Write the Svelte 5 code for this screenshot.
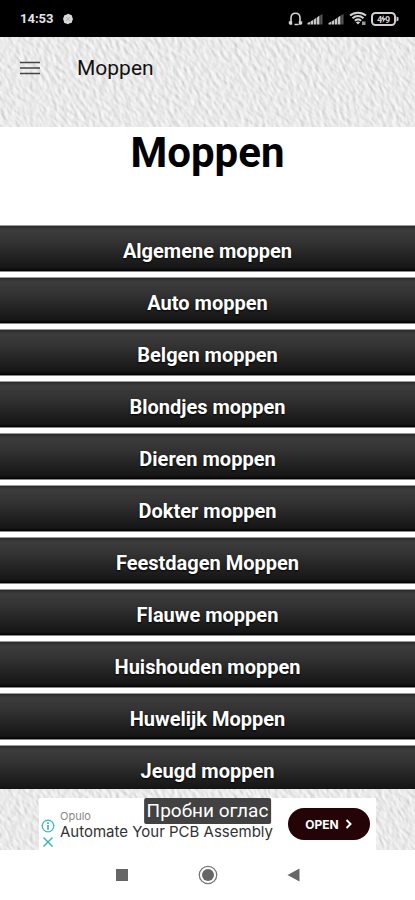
<script>
  const categories = [
    'Algemene moppen',
    'Auto moppen',
    'Belgen moppen',
    'Blondjes moppen',
    'Dieren moppen',
    'Dokter moppen',
    'Feestdagen Moppen',
    'Flauwe moppen',
    'Huishouden moppen',
    'Huwelijk Moppen',
    'Jeugd moppen'
  ];
</script>

{#snippet plaster(id)}
  <svg class="plaster" aria-hidden="true">
    <filter {id} x="0" y="0" width="100%" height="100%" color-interpolation-filters="sRGB">
      <feTurbulence type="fractalNoise" baseFrequency="0.26 0.13" numOctaves="2" seed="8" />
      <feColorMatrix type="matrix" values="0 0 0 0 0  0 0 0 0 0  0 0 0 0 0  1 0 0 0 0" />
      <feDiffuseLighting surfaceScale="0.6" diffuseConstant="1.04" lighting-color="#f6f6f6">
        <feDistantLight azimuth="200" elevation="66" />
      </feDiffuseLighting>
    </filter>
    <g transform="rotate(-32)">
      <rect x="-100" y="-20" width="700" height="400" filter="url(#{id})" />
    </g>
  </svg>
{/snippet}

{#snippet signal()}
  <svg width="17" height="12" viewBox="0 0 17 12" aria-hidden="true">
    <path d="M.5 11.500V10L3 8.800V11.500zM3.500 11.500V8.500L6 7V11.500zM6.600 11.500V6.700L9 5V11.500zM9.600 11.500V4.700L12.500 2.500V11.500z" fill="#c8c8c8" />
    <path d="M13.200 11.500V2.300L15.500 1V11.500z" fill="#555" />
  </svg>
{/snippet}

<div class="screen">
  <div class="status">
    <span class="clock">14:53</span>
    <svg class="dot" width="12" height="12" viewBox="0 0 12 12" aria-hidden="true">
      <path d="M6 .7 8 1.500 10 2.500 10.300 4.500 11 6 10.200 8 9.500 10 7.500 10.300 6 11.200 4 10.400 2 9.800 1.700 7.500 1 6 1.700 4 2.400 2.200 4.200 1.700z" fill="#d8d8d8" />
      <path d="M4 4l4 4M8 4 4 8" stroke="#aaa" stroke-width=".8" />
    </svg>
    <div class="indicators">
      <svg width="15" height="14" viewBox="0 0 15 14" aria-hidden="true">
        <path d="M3 10V6.200C3 3 4.800 1.200 7.500 1.200S12 3 12 6.200V10" fill="none" stroke="#d4d4d4" stroke-width="1.600" />
        <path d="M.8 9.200h3.400v3.600H1.800L.8 11.800zM10.800 9.200h3.400v2.600l-1 1h-2.400zM6.500 11.800h4v1.400h-4z" fill="#d4d4d4" />
      </svg>
      {@render signal()}
      {@render signal()}
      <svg width="18" height="15" viewBox="0 0 18 15" aria-hidden="true">
        <g fill="none" stroke="#d4d4d4" stroke-width="2">
          <path d="M1 4.600C5.500.7 12.500.7 17 4.600" />
          <path d="M3.500 7.200c3.300-2.800 7.700-2.800 11 0" />
          <path d="M5.800 9.700c2-1.700 4.400-1.700 6.400 0" />
        </g>
        <path d="M6.800 11.200q2.200-1.500 4.400 0L9 13.600z" fill="#d4d4d4" />
        <path d="M13 10.500h3.500V14H13z" fill="#999" />
      </svg>
      <svg class="battery" width="28" height="14" viewBox="0 0 28 14" aria-hidden="true">
        <rect x="1" y="1" width="23" height="12" rx="3.500" fill="none" stroke="#d0d0d0" stroke-width="2" />
        <path d="M25.500 4.500l2 1v3l-2 1z" fill="#d0d0d0" />
        <text x="6" y="10.500">4</text>
        <text x="14" y="10.500">9</text>
        <path d="M12.800 3 9.800 7.500h2.500L11.500 11l3.500-4.800h-2.500z" fill="#ddd" />
      </svg>
    </div>
  </div>

  <header>
    {@render plaster('plaster-top')}
    <button class="menu" aria-label="Menu">
      <svg width="20" height="14" viewBox="0 0 20 14" aria-hidden="true">
        <path d="M0 1.500h20M0 7h20M0 12.500h20" stroke="#444" stroke-width="1.700" />
      </svg>
    </button>
    <span class="title">Moppen</span>
  </header>

  <main>
    <h1>Moppen</h1>
    <nav class="list">
      {#each categories as name}
        <button class="category">{name}</button>
      {/each}
    </nav>
  </main>

  <div class="banner">
    {@render plaster('plaster-bottom')}
    <aside class="ad">
      <div class="marks">
        <button aria-label="Info">
          <svg width="14" height="14" viewBox="0 0 14 14" aria-hidden="true">
            <circle cx="7" cy="7" r="5.800" fill="none" stroke="#3fb4c8" stroke-width="1.300" />
            <path d="M7 3.200v1.700M7 6v4.700" stroke="#3fb4c8" stroke-width="1.700" />
          </svg>
        </button>
        <button aria-label="Close">
          <svg width="14" height="12" viewBox="0 0 14 12" aria-hidden="true">
            <path d="M2.500 1.500l9 9M11.500 1.500l-9 9" stroke="#3fb4c8" stroke-width="1.500" />
          </svg>
        </button>
      </div>
      <div class="copy">
        <span class="brand">Opulo</span>
        <span class="headline">Automate Your PCB Assembly</span>
      </div>
      <button class="open">
        OPEN
        <svg width="8" height="10" viewBox="0 0 8 10" aria-hidden="true">
          <path d="M1.500 1l4 4-4 4" fill="none" stroke="#fff" stroke-width="2" />
        </svg>
      </button>
      <span class="test">Пробни оглас</span>
    </aside>
  </div>

  <div class="system">
    <button aria-label="Recent apps">
      <svg width="20" height="20" viewBox="0 0 20 20" aria-hidden="true">
        <rect x="4" y="4" width="12" height="12" fill="#666" />
      </svg>
    </button>
    <button aria-label="Home">
      <svg width="20" height="20" viewBox="0 0 20 20" aria-hidden="true">
        <circle cx="10" cy="10" r="8.700" fill="none" stroke="#777" stroke-width="1.300" />
        <circle cx="10" cy="10" r="6" fill="#666" />
      </svg>
    </button>
    <button aria-label="Back">
      <svg width="20" height="20" viewBox="0 0 20 20" aria-hidden="true">
        <path d="M15.500 3.500v13L3.500 10z" fill="#666" />
      </svg>
    </button>
  </div>
</div>

<style>
  :global(body) {
    margin: 0;
  }

  .screen {
    display: flex;
    flex-direction: column;
    height: 100vh;
    overflow: hidden;
    background: #fff;
    font-family: Roboto, 'Noto Sans', sans-serif;
    color: #000;
  }

  button {
    margin: 0;
    padding: 0;
    border: 0;
    background: none;
    font: inherit;
    color: inherit;
    cursor: pointer;
  }

  svg {
    display: block;
  }

  .status {
    flex: none;
    display: flex;
    align-items: center;
    gap: 8px;
    height: 37px;
    padding: 0 16px 0 20px;
    box-sizing: border-box;
    background: #000;
    color: #e4e4e4;
  }

  .clock {
    font-size: 13px;
    font-weight: 700;
  }

  .indicators {
    display: flex;
    align-items: center;
    margin-left: auto;
    gap: 4px;
  }

  .battery text {
    font: 700 9px Roboto, sans-serif;
    fill: #d0d0d0;
  }

  header {
    flex: none;
    position: relative;
    display: flex;
    align-items: center;
    height: 90px;
    padding: 0 20px 28px;
    gap: 37px;
    box-sizing: border-box;
    background: #e8e8e8;
  }

  .plaster {
    position: absolute;
    inset: 0;
    width: 100%;
    height: 100%;
    overflow: hidden;
  }

  .menu,
  .title {
    position: relative;
  }

  .title {
    font-size: 21px;
    line-height: 26px;
    color: #111;
  }

  main {
    flex: 1;
    min-height: 0;
    overflow: hidden;
  }

  h1 {
    margin: 0;
    padding-bottom: 46px;
    font-size: 42px;
    line-height: 52px;
    font-weight: 700;
    text-align: center;
  }

  .list {
    display: flex;
    flex-direction: column;
    gap: 5px;
  }

  .category {
    flex: none;
    height: 47px;
    padding-top: 4px;
    box-sizing: border-box;
    border-top: 1px solid #999;
    border-bottom: 1px solid #888;
    background: linear-gradient(#2a2a2a, #3c3c3c 8%, #333 35%, #151515 94%, #000);
    color: #fff;
    font-size: 20px;
    line-height: 24px;
    font-weight: 700;
    text-shadow: 0 1px 2px #000;
  }

  .banner {
    flex: none;
    position: relative;
    display: flex;
    justify-content: center;
    padding: 9px 39px 0;
    background: #e8e8e8;
  }

  .ad {
    position: relative;
    display: flex;
    align-items: center;
    width: 100%;
    height: 52px;
    padding-right: 6px;
    box-sizing: border-box;
    background: #fff;
  }

  .marks {
    display: flex;
    flex-direction: column;
    gap: 3px;
    padding: 18px 5px 0 2px;
  }

  .copy {
    flex: 1;
    min-width: 0;
    display: flex;
    flex-direction: column;
    white-space: nowrap;
    font-family: Inter, sans-serif;
    font-size: 15px;
    line-height: 16px;
    color: #333;
  }

  .brand {
    font-size: 11px;
    color: #888;
  }

  .open {
    display: flex;
    align-items: center;
    justify-content: center;
    gap: 6px;
    width: 82px;
    height: 32px;
    border-radius: 16px;
    background: #240406;
    color: #fff;
    font-family: Inter, sans-serif;
    font-size: 12px;
    font-weight: 700;
  }

  .test {
    position: absolute;
    top: 0;
    left: 50%;
    transform: translateX(-50%);
    padding: 0 3px;
    border-radius: 2px;
    background: #424242;
    color: #fff;
    font-size: 19px;
    line-height: 26px;
    white-space: nowrap;
  }

  .system {
    flex: none;
    display: flex;
    align-items: center;
    justify-content: center;
    gap: 66px;
    height: 50px;
    background: #fff;
  }
</style>
